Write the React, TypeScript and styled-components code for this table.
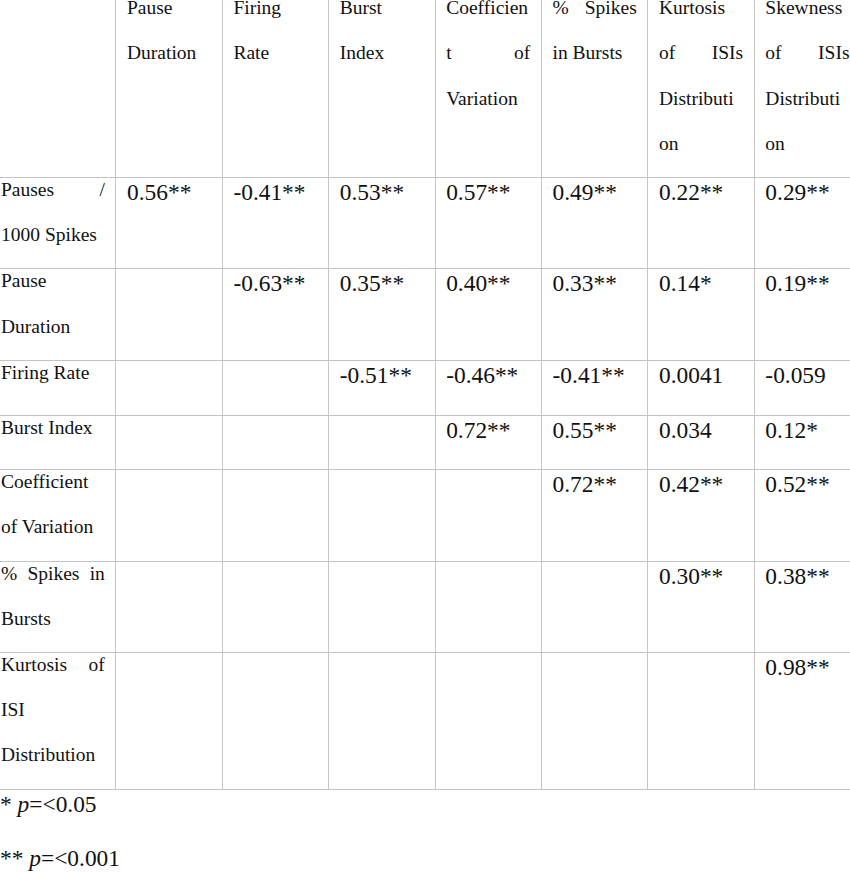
import styled, { createGlobalStyle } from 'styled-components';

const SMALL_LINE = 45.2;
const LARGE_LINE = 53.8;
const SERIF = `'Liberation Serif', Tinos, 'Times New Roman', 'DejaVu Serif', serif`;

const GlobalStyle = createGlobalStyle`
  html, body {
    margin: 0;
    padding: 0;
    background: #fff;
    overflow: hidden;
  }
  body {
    font-family: ${SERIF};
    color: #111;
  }
`;

const Page = styled.div`
  width: 850px;
  height: 872px;
  overflow: hidden;
  font-family: ${SERIF};
`;

const Table = styled.table`
  border-collapse: collapse;
  table-layout: fixed;
  width: 870.8px;
  margin: -4.8px 0 0 -10.6px;
  font-family: ${SERIF};
`;

const Cell = styled.td<{ $first?: boolean }>`
  width: ${(p) => (p.$first ? '126px' : '106.4px')};
  box-sizing: border-box;
  padding: 0 10.6px;
  vertical-align: top;
  border: 1px solid #c4c4c4;
`;

const Line = styled.div<{ $justify?: boolean; $large?: boolean }>`
  height: ${(p) => (p.$large ? LARGE_LINE : SMALL_LINE)}px;
  font-family: ${SERIF};
  font-size: ${(p) => (p.$large ? '23.4px' : '19.5px')};
  line-height: ${(p) => (p.$large ? '28px' : '23.4px')};
  white-space: nowrap;
  text-align: ${(p) => (p.$justify ? 'justify' : 'left')};
  text-align-last: ${(p) => (p.$justify ? 'justify' : 'left')};
`;

const Notes = styled.div`
  padding-top: 0.5px;
`;

const Em = styled.i`
  font-style: italic;
`;

type Ln = { t: string; j?: boolean };
const l = (t: string, j = false): Ln => ({ t, j });

const headers: Ln[][] = [
  [l('Pause'), l('Duration')],
  [l('Firing'), l('Rate')],
  [l('Burst'), l('Index')],
  [l('Coefficien'), l('t of', true), l('Variation')],
  [l('% Spikes', true), l('in Bursts')],
  [l('Kurtosis'), l('of ISIs', true), l('Distributi'), l('on')],
  [l('Skewness'), l('of ISIs', true), l('Distributi'), l('on')],
];

const rows: { label: Ln[]; values: string[] }[] = [
  {
    label: [l('Pauses /', true), l('1000 Spikes')],
    values: ['0.56**', '-0.41**', '0.53**', '0.57**', '0.49**', '0.22**', '0.29**'],
  },
  {
    label: [l('Pause'), l('Duration')],
    values: ['', '-0.63**', '0.35**', '0.40**', '0.33**', '0.14*', '0.19**'],
  },
  {
    label: [l('Firing Rate')],
    values: ['', '', '-0.51**', '-0.46**', '-0.41**', '0.0041', '-0.059'],
  },
  {
    label: [l('Burst Index')],
    values: ['', '', '', '0.72**', '0.55**', '0.034', '0.12*'],
  },
  {
    label: [l('Coefficient'), l('of Variation')],
    values: ['', '', '', '', '0.72**', '0.42**', '0.52**'],
  },
  {
    label: [l('% Spikes in', true), l('Bursts')],
    values: ['', '', '', '', '', '0.30**', '0.38**'],
  },
  {
    label: [l('Kurtosis of', true), l('ISI'), l('Distribution')],
    values: ['', '', '', '', '', '', '0.98**'],
  },
];

const Lines = ({ lines }: { lines: Ln[] }) => (
  <>
    {lines.map((ln, i) => (
      <Line key={i} $justify={ln.j}>
        {ln.t}
      </Line>
    ))}
  </>
);

const App = () => {
  return (
    <Page>
      <GlobalStyle />
      <Table>
        <tbody>
          <tr>
            <Cell $first />
            {headers.map((h, i) => (
              <Cell key={i}>
                <Lines lines={h} />
              </Cell>
            ))}
          </tr>
          {rows.map((r, i) => (
            <tr key={i}>
              <Cell $first>
                <Lines lines={r.label} />
              </Cell>
              {r.values.map((v, k) => (
                <Cell key={k}>{v && <Line $large>{v}</Line>}</Cell>
              ))}
            </tr>
          ))}
        </tbody>
      </Table>
      <Notes>
        <Line $large>
          * <Em>p</Em>=&lt;0.05
        </Line>
        <Line $large>
          ** <Em>p</Em>=&lt;0.001
        </Line>
      </Notes>
    </Page>
  );
};

export default App;
